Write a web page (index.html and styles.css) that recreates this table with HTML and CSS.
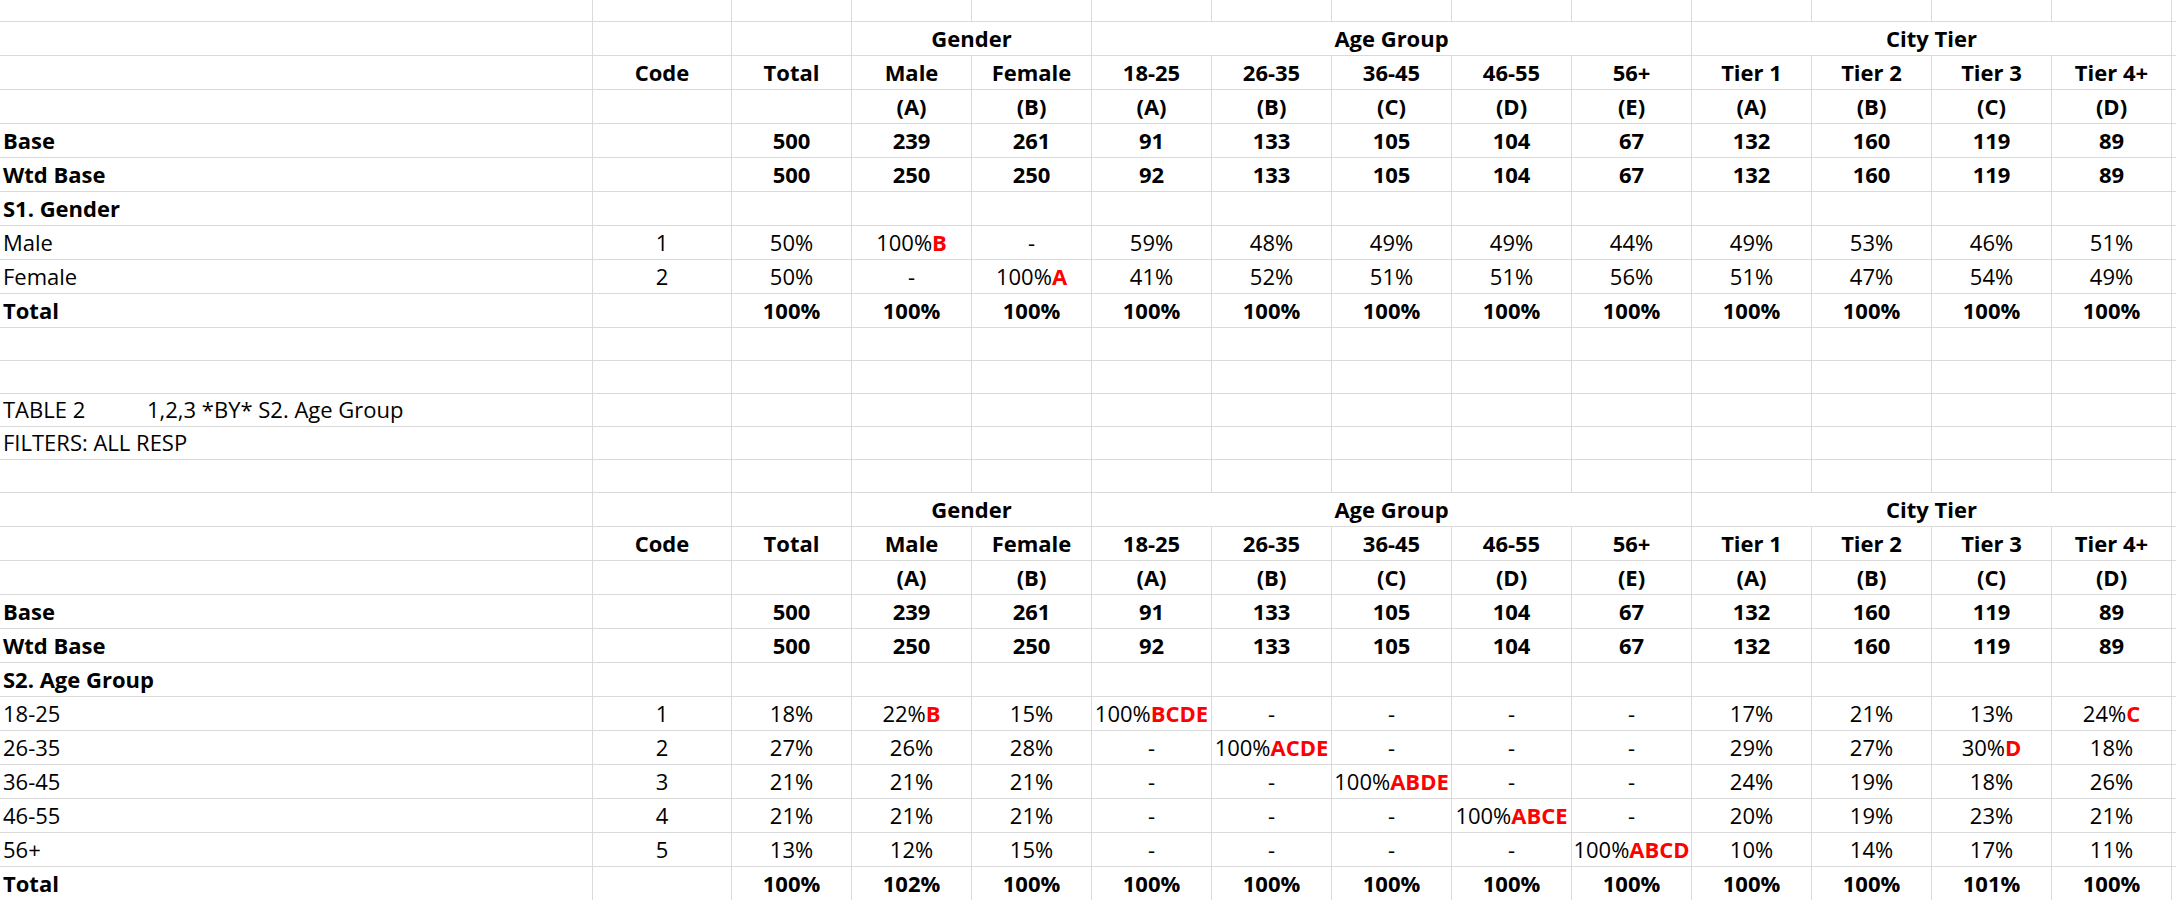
FILE: index.html
```html
<!DOCTYPE html>
<html lang="en">
<head>
<meta charset="utf-8">
<title>Crosstab</title>
<link rel="stylesheet" href="styles.css">
</head>
<body>
<table class="sheet">
<colgroup>
<col class="c-label"><col class="c-code">
<col class="c-data"><col class="c-data"><col class="c-data"><col class="c-data"><col class="c-data"><col class="c-data">
<col class="c-data"><col class="c-data"><col class="c-data"><col class="c-data"><col class="c-data"><col class="c-data">
<col class="c-fill">
</colgroup>
<tbody>
<tr class="top"><td class="lbl"></td><td></td><td></td><td></td><td></td><td></td><td></td><td></td><td></td><td></td><td></td><td></td><td></td><td></td><td></td></tr>

<tr class="b"><td class="lbl"></td><td></td><td></td><td colspan="2">Gender</td><td colspan="5">Age Group</td><td colspan="4">City Tier</td><td></td></tr>
<tr class="b"><td class="lbl"></td><td>Code</td><td>Total</td><td>Male</td><td>Female</td><td>18-25</td><td>26-35</td><td>36-45</td><td>46-55</td><td>56+</td><td>Tier 1</td><td>Tier 2</td><td>Tier 3</td><td>Tier 4+</td><td></td></tr>
<tr class="b"><td class="lbl"></td><td></td><td></td><td>(A)</td><td>(B)</td><td>(A)</td><td>(B)</td><td>(C)</td><td>(D)</td><td>(E)</td><td>(A)</td><td>(B)</td><td>(C)</td><td>(D)</td><td></td></tr>
<tr class="b"><td class="lbl">Base</td><td></td><td>500</td><td>239</td><td>261</td><td>91</td><td>133</td><td>105</td><td>104</td><td>67</td><td>132</td><td>160</td><td>119</td><td>89</td><td></td></tr>
<tr class="b"><td class="lbl">Wtd Base</td><td></td><td>500</td><td>250</td><td>250</td><td>92</td><td>133</td><td>105</td><td>104</td><td>67</td><td>132</td><td>160</td><td>119</td><td>89</td><td></td></tr>
<tr><td class="lbl strong">S1. Gender</td><td></td><td></td><td></td><td></td><td></td><td></td><td></td><td></td><td></td><td></td><td></td><td></td><td></td><td></td></tr>
<tr><td class="lbl">Male</td><td>1</td><td>50%</td><td>100%<span class="sig">B</span></td><td>-</td><td>59%</td><td>48%</td><td>49%</td><td>49%</td><td>44%</td><td>49%</td><td>53%</td><td>46%</td><td>51%</td><td></td></tr>
<tr><td class="lbl">Female</td><td>2</td><td>50%</td><td>-</td><td>100%<span class="sig">A</span></td><td>41%</td><td>52%</td><td>51%</td><td>51%</td><td>56%</td><td>51%</td><td>47%</td><td>54%</td><td>49%</td><td></td></tr>
<tr class="b"><td class="lbl">Total</td><td></td><td>100%</td><td>100%</td><td>100%</td><td>100%</td><td>100%</td><td>100%</td><td>100%</td><td>100%</td><td>100%</td><td>100%</td><td>100%</td><td>100%</td><td></td></tr>

<tr class="short"><td class="lbl"></td><td></td><td></td><td></td><td></td><td></td><td></td><td></td><td></td><td></td><td></td><td></td><td></td><td></td><td></td></tr>
<tr class="short"><td class="lbl"></td><td></td><td></td><td></td><td></td><td></td><td></td><td></td><td></td><td></td><td></td><td></td><td></td><td></td><td></td></tr>
<tr class="short"><td class="lbl"><span class="tname">TABLE 2</span>1,2,3 *BY* S2. Age Group</td><td></td><td></td><td></td><td></td><td></td><td></td><td></td><td></td><td></td><td></td><td></td><td></td><td></td><td></td></tr>
<tr class="short"><td class="lbl">FILTERS: ALL RESP</td><td></td><td></td><td></td><td></td><td></td><td></td><td></td><td></td><td></td><td></td><td></td><td></td><td></td><td></td></tr>
<tr class="short"><td class="lbl"></td><td></td><td></td><td></td><td></td><td></td><td></td><td></td><td></td><td></td><td></td><td></td><td></td><td></td><td></td></tr>

<tr class="b"><td class="lbl"></td><td></td><td></td><td colspan="2">Gender</td><td colspan="5">Age Group</td><td colspan="4">City Tier</td><td></td></tr>
<tr class="b"><td class="lbl"></td><td>Code</td><td>Total</td><td>Male</td><td>Female</td><td>18-25</td><td>26-35</td><td>36-45</td><td>46-55</td><td>56+</td><td>Tier 1</td><td>Tier 2</td><td>Tier 3</td><td>Tier 4+</td><td></td></tr>
<tr class="b"><td class="lbl"></td><td></td><td></td><td>(A)</td><td>(B)</td><td>(A)</td><td>(B)</td><td>(C)</td><td>(D)</td><td>(E)</td><td>(A)</td><td>(B)</td><td>(C)</td><td>(D)</td><td></td></tr>
<tr class="b"><td class="lbl">Base</td><td></td><td>500</td><td>239</td><td>261</td><td>91</td><td>133</td><td>105</td><td>104</td><td>67</td><td>132</td><td>160</td><td>119</td><td>89</td><td></td></tr>
<tr class="b"><td class="lbl">Wtd Base</td><td></td><td>500</td><td>250</td><td>250</td><td>92</td><td>133</td><td>105</td><td>104</td><td>67</td><td>132</td><td>160</td><td>119</td><td>89</td><td></td></tr>
<tr><td class="lbl strong">S2. Age Group</td><td></td><td></td><td></td><td></td><td></td><td></td><td></td><td></td><td></td><td></td><td></td><td></td><td></td><td></td></tr>
<tr><td class="lbl">18-25</td><td>1</td><td>18%</td><td>22%<span class="sig">B</span></td><td>15%</td><td>100%<span class="sig">BCDE</span></td><td>-</td><td>-</td><td>-</td><td>-</td><td>17%</td><td>21%</td><td>13%</td><td>24%<span class="sig">C</span></td><td></td></tr>
<tr><td class="lbl">26-35</td><td>2</td><td>27%</td><td>26%</td><td>28%</td><td>-</td><td>100%<span class="sig">ACDE</span></td><td>-</td><td>-</td><td>-</td><td>29%</td><td>27%</td><td>30%<span class="sig">D</span></td><td>18%</td><td></td></tr>
<tr><td class="lbl">36-45</td><td>3</td><td>21%</td><td>21%</td><td>21%</td><td>-</td><td>-</td><td>100%<span class="sig">ABDE</span></td><td>-</td><td>-</td><td>24%</td><td>19%</td><td>18%</td><td>26%</td><td></td></tr>
<tr><td class="lbl">46-55</td><td>4</td><td>21%</td><td>21%</td><td>21%</td><td>-</td><td>-</td><td>-</td><td>100%<span class="sig">ABCE</span></td><td>-</td><td>20%</td><td>19%</td><td>23%</td><td>21%</td><td></td></tr>
<tr><td class="lbl">56+</td><td>5</td><td>13%</td><td>12%</td><td>15%</td><td>-</td><td>-</td><td>-</td><td>-</td><td>100%<span class="sig">ABCD</span></td><td>10%</td><td>14%</td><td>17%</td><td>11%</td><td></td></tr>
<tr class="b"><td class="lbl">Total</td><td></td><td>100%</td><td>102%</td><td>100%</td><td>100%</td><td>100%</td><td>100%</td><td>100%</td><td>100%</td><td>100%</td><td>100%</td><td>101%</td><td>100%</td><td></td></tr>
</tbody>
</table>
</body>
</html>
```

FILE: styles.css
```css
html, body {
  margin: 0;
  padding: 0;
  background: #ffffff;
  overflow: hidden;
}

body {
  width: 2176px;
  height: 900px;
  font-family: "Open Sans", "Noto Sans", sans-serif;
  font-size: 22px;
  color: #000000;
}

.sheet {
  border-collapse: separate;
  border-spacing: 0;
  table-layout: fixed;
  width: 2232px;
}

.c-label { width: 593px; }
.c-code { width: 139px; }
.c-data { width: 120px; }
.c-fill { width: 60px; }

.sheet td {
  box-sizing: border-box;
  border-right: 1px solid #dadada;
  border-bottom: 1px solid #dadada;
  padding: 0 0 2px 0;
  line-height: 30px;
  vertical-align: bottom;
  text-align: center;
  white-space: nowrap;
  overflow: visible;
}

.sheet tr { height: 34px; }
.sheet tr.top { height: 22px; }
.sheet tr.short { height: 33px; }

.sheet td.lbl {
  text-align: left;
  padding-left: 3px;
}

.b td, .strong {
  font-weight: 700;
}

.sig {
  color: #ff0000;
  font-weight: 700;
}

.tname {
  display: inline-block;
  width: 144px;
}
```
